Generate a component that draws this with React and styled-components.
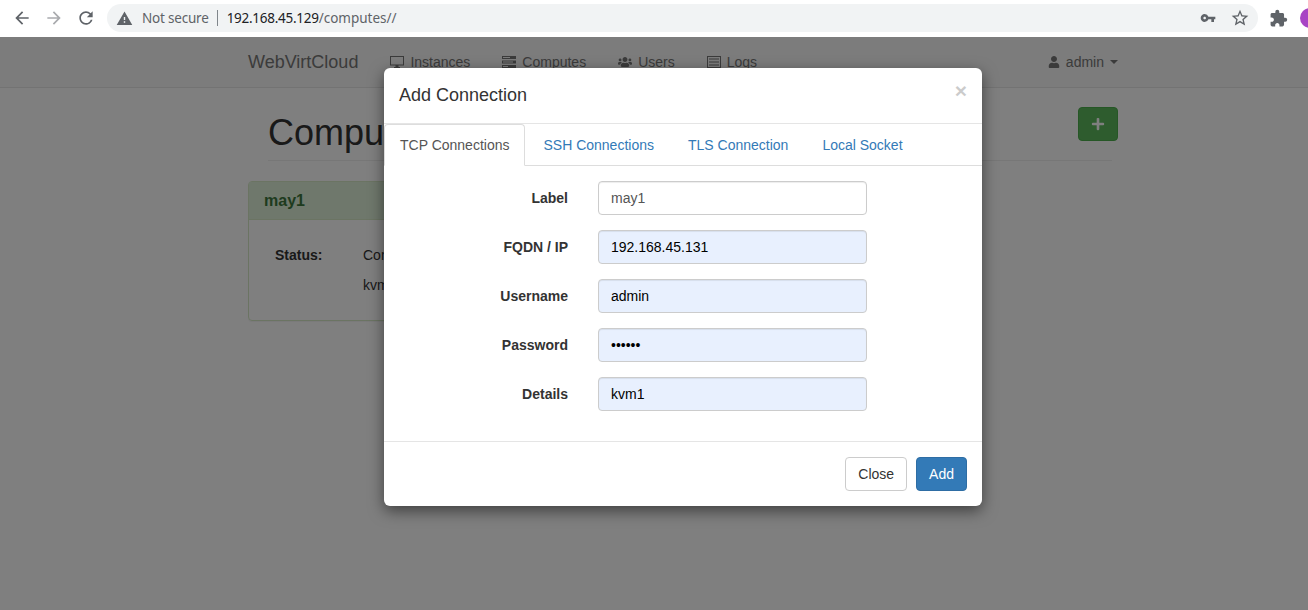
import React from "react";
import styled, { createGlobalStyle } from "styled-components";
import {
  MdArrowBack,
  MdArrowForward,
  MdRefresh,
  MdWarning,
  MdVpnKey,
  MdStarBorder,
  MdExtension,
} from "react-icons/md";
import { FaUsers, FaUser, FaPlus } from "react-icons/fa";

const Global = createGlobalStyle`
  html, body {
    margin: 0;
    height: 100%;
    overflow: hidden;
    background: #fff;
    font-family: "Liberation Sans", Arial, sans-serif;
    font-size: 14px;
    color: #333;
  }
  * { box-sizing: border-box; }
`;

const Window = styled.div`
  width: 1308px;
  height: 610px;
  display: flex;
  flex-direction: column;
  overflow: hidden;
`;

const Toolbar = styled.div`
  height: 37px;
  flex: none;
  display: flex;
  align-items: center;
  padding: 0 0 1px 12px;
  background: #fff;
`;

const NavIcon = styled.span`
  width: 20px;
  height: 20px;
  margin-right: 12px;
  display: flex;
  align-items: center;
  justify-content: center;
  font-size: 20px;
  color: ${(p) => (p.$off ? "#a9abae" : "#5f6368")};
`;

const Omnibox = styled.div`
  flex: none;
  width: 1151px;
  height: 28px;
  margin-left: -1px;
  border-radius: 14px;
  background: #f1f3f4;
  display: flex;
  align-items: center;
  padding: 0 8px 0 9px;
  font-family: "Noto Sans", sans-serif;
  font-size: 13.5px;
  color: #5f6368;
`;

const WarnIcon = styled(MdWarning)`
  font-size: 17px;
  color: #5f6368;
  margin-right: 9px;
`;

const Security = styled.span`
  letter-spacing: -0.2px;
`;

const Divider = styled.span`
  width: 1px;
  height: 16px;
  background: #80868b;
  margin: 0 9px 0 8px;
`;

const Host = styled.span`
  color: #202124;
  letter-spacing: -0.27px;
`;

const OmniSpacer = styled.span`
  flex: 1;
`;

const OmniIcon = styled.span`
  display: flex;
  flex: none;
  font-size: ${(p) => p.$size || 18}px;
  color: #5f6368;
  margin-left: ${(p) => p.$gap || 0}px;
`;

const Avatar = styled.span`
  width: 20px;
  height: 20px;
  border-radius: 50%;
  background: #a844c4;
  flex: none;
  margin-left: 12px;
`;

const Stage = styled.div`
  flex: 1;
  position: relative;
  overflow: hidden;
`;

const Navbar = styled.nav`
  height: 51px;
  background: #f8f8f8;
  border-bottom: 1px solid #e7e7e7;
  display: flex;
  align-items: center;
  padding: 0 190px 0 248px;
  color: #777;
`;

const Brand = styled.span`
  font-size: 18px;
  margin-right: 32px;
`;

const NavLink = styled.span`
  display: flex;
  align-items: center;
  gap: 6px;
  margin-right: 32px;
`;

const NavGlyph = styled.span`
  display: flex;
  font-size: ${(p) => p.$size || 14}px;
`;

const NavSpacer = styled.span`
  flex: 1;
`;

const Caret = styled.span`
  width: 0;
  height: 0;
  border-top: 4px solid #777;
  border-left: 4px solid transparent;
  border-right: 4px solid transparent;
`;

const UserLink = styled(NavLink)`
  margin-right: 0;
`;

const Content = styled.main`
  width: 870px;
  margin-left: 248px;
`;

const PageHeader = styled.div`
  margin: 19px 6px 20px 20px;
  height: 54px;
  border-bottom: 1px solid #eee;
  position: relative;
`;

const PageTitle = styled.h1`
  margin: 0;
  font-size: 36px;
  font-weight: 500;
  line-height: 40px;
  padding-top: 6px;
`;

const PlusButton = styled.span`
  position: absolute;
  right: -6px;
  top: 0;
  width: 40px;
  height: 34px;
  border-radius: 4px;
  background: #5cb85c;
  border: 1px solid #4cae4c;
  color: #fff;
  display: flex;
  align-items: center;
  justify-content: center;
  font-size: 14px;
`;

const Panel = styled.section`
  width: 420px;
  height: 140px;
  border: 1px solid #d6e9c6;
  border-radius: 4px;
  box-shadow: 0 1px 1px rgba(0, 0, 0, 0.05);
`;

const PanelHeading = styled.div`
  height: 38px;
  padding: 0 15px;
  display: flex;
  align-items: center;
  background: #dff0d8;
  border-bottom: 1px solid #d6e9c6;
  color: #3c763d;
  font-size: 16px;
  font-weight: 700;
`;

const PanelBody = styled.dl`
  margin: 25px 0 0 26px;
  display: grid;
  grid-template-columns: 88px 1fr;
  row-gap: 10px;
  line-height: 20px;
`;

const StatusKey = styled.dt`
  font-weight: 700;
`;

const StatusValue = styled.dd`
  margin: 0;
  grid-column: 2;
`;

const Backdrop = styled.div`
  position: absolute;
  inset: 0;
  background: rgba(0, 0, 0, 0.5);
`;

const Modal = styled.div`
  position: absolute;
  left: 384px;
  top: 31px;
  width: 598px;
  background: #fff;
  border-radius: 6px;
  box-shadow: 0 5px 15px rgba(0, 0, 0, 0.5);
`;

const ModalHeader = styled.div`
  height: 56px;
  padding: 0 15px;
  display: flex;
  align-items: center;
  justify-content: space-between;
  border-bottom: 1px solid #e5e5e5;
`;

const ModalTitle = styled.h4`
  margin: 0;
  font-size: 18px;
  font-weight: 500;
`;

const CloseX = styled.span`
  font-size: 21px;
  font-weight: 700;
  line-height: 1;
  color: #000;
  opacity: 0.2;
  margin-top: -11px;
`;

const Tabs = styled.ul`
  list-style: none;
  margin: 0;
  padding: 0;
  height: 42px;
  display: flex;
  border-bottom: 1px solid #ddd;
`;

const Tab = styled.li`
  height: 42px;
  padding: 10px 15px;
  line-height: 20px;
  margin-right: 2px;
  border: 1px solid ${(p) => (p.$active ? "#ddd" : "transparent")};
  border-bottom-color: ${(p) => (p.$active ? "#fff" : "transparent")};
  border-radius: 4px 4px 0 0;
  background: ${(p) => (p.$active ? "#fff" : "transparent")};
  color: ${(p) => (p.$active ? "#555" : "#337ab7")};
`;

const Form = styled.form`
  padding: 15px 0 30px;
  display: flex;
  flex-direction: column;
  gap: 15px;
  border-bottom: 1px solid #e5e5e5;
`;

const Row = styled.div`
  display: flex;
  align-items: center;
`;

const Label = styled.label`
  width: 184px;
  text-align: right;
  font-weight: 700;
  margin-right: 30px;
`;

const Input = styled.input`
  width: 269px;
  height: 34px;
  padding: 6px 12px;
  border: 1px solid #ccc;
  border-radius: 4px;
  font-family: inherit;
  font-size: 14px;
  color: ${(p) => (p.$filled ? "#000" : "#555")};
  background: ${(p) => (p.$filled ? "#e8f0fe" : "#fff")};
  box-shadow: inset 0 1px 1px rgba(0, 0, 0, 0.075);
  outline: none;
`;

const Footer = styled.div`
  padding: 15px;
  display: flex;
  justify-content: flex-end;
  gap: 9px;
`;

const Button = styled.button`
  height: 34px;
  padding: 6px 12px;
  border-radius: 4px;
  font-family: inherit;
  font-size: 14px;
  border: 1px solid ${(p) => (p.$primary ? "#2e6da4" : "#ccc")};
  background: ${(p) => (p.$primary ? "#337ab7" : "#fff")};
  color: ${(p) => (p.$primary ? "#fff" : "#333")};
`;

const MonitorIcon = () => (
  <svg width="14" height="14" viewBox="0 0 14 14" fill="currentColor">
    <path d="M0 1h14v9.5H8.5V12H10v1H4v-1h1.5v-1.5H0V1zm1 1v7.5h12V2H1z" />
  </svg>
);

const TasksIcon = () => (
  <svg width="14" height="14" viewBox="0 0 14 14" fill="currentColor">
    <path d="M0 1h14v3H0V1zm1 1v1h7V2H1zM0 5.5h14v3H0v-3zm1 1v1h10v-1H1zM0 10h14v3H0v-3zm1 1v1h5v-1H1z" />
  </svg>
);

const ListIcon = () => (
  <svg width="14" height="14" viewBox="0 0 14 14" fill="currentColor">
    <path d="M0 1h14v12H0V1zm1 1v10h12V2H1zm1 1.5h10v1H2v-1zm0 3h10v1H2v-1zm0 3h10v1H2v-1z" />
  </svg>
);

const fields = [
  { label: "Label", value: "may1" },
  { label: "FQDN / IP", value: "192.168.45.131", filled: true },
  { label: "Username", value: "admin", filled: true },
  { label: "Password", value: "secret", type: "password", filled: true },
  { label: "Details", value: "kvm1", filled: true },
];

const tabs = ["TCP Connections", "SSH Connections", "TLS Connection", "Local Socket"];

const navLinks = [
  { icon: <MonitorIcon />, text: "Instances" },
  { icon: <TasksIcon />, text: "Computes" },
  { icon: <FaUsers />, text: "Users" },
  { icon: <ListIcon />, text: "Logs" },
];

export default function App() {
  return (
    <Window>
      <Global />
      <Toolbar>
        <NavIcon><MdArrowBack /></NavIcon>
        <NavIcon $off><MdArrowForward /></NavIcon>
        <NavIcon><MdRefresh /></NavIcon>
        <Omnibox>
          <WarnIcon />
          <Security>Not secure</Security>
          <Divider />
          <Host>192.168.45.129</Host>/computes//
          <OmniSpacer />
          <OmniIcon $size={16}><MdVpnKey /></OmniIcon>
          <OmniIcon $size={20} $gap={14}><MdStarBorder /></OmniIcon>
        </Omnibox>
        <OmniIcon $size={19} $gap={11}><MdExtension /></OmniIcon>
        <Avatar />
      </Toolbar>
      <Stage>
        <Navbar>
          <Brand>WebVirtCloud</Brand>
          {navLinks.map((l) => (
            <NavLink key={l.text}>
              <NavGlyph>{l.icon}</NavGlyph>
              {l.text}
            </NavLink>
          ))}
          <NavSpacer />
          <UserLink>
            <NavGlyph $size={12}><FaUser /></NavGlyph>
            admin
            <Caret />
          </UserLink>
        </Navbar>
        <Content>
          <PageHeader>
            <PageTitle>Computes</PageTitle>
            <PlusButton><FaPlus /></PlusButton>
          </PageHeader>
          <Panel>
            <PanelHeading>may1</PanelHeading>
            <PanelBody>
              <StatusKey>Status:</StatusKey>
              <StatusValue>Connected</StatusValue>
              <StatusValue>kvm1</StatusValue>
            </PanelBody>
          </Panel>
        </Content>
        <Backdrop />
        <Modal>
          <ModalHeader>
            <ModalTitle>Add Connection</ModalTitle>
            <CloseX>×</CloseX>
          </ModalHeader>
          <Tabs>
            {tabs.map((t, i) => (
              <Tab key={t} $active={i === 0}>{t}</Tab>
            ))}
          </Tabs>
          <Form>
            {fields.map((f) => (
              <Row key={f.label}>
                <Label>{f.label}</Label>
                <Input type={f.type || "text"} defaultValue={f.value} $filled={f.filled} />
              </Row>
            ))}
          </Form>
          <Footer>
            <Button type="button">Close</Button>
            <Button type="button" $primary>Add</Button>
          </Footer>
        </Modal>
      </Stage>
    </Window>
  );
}
